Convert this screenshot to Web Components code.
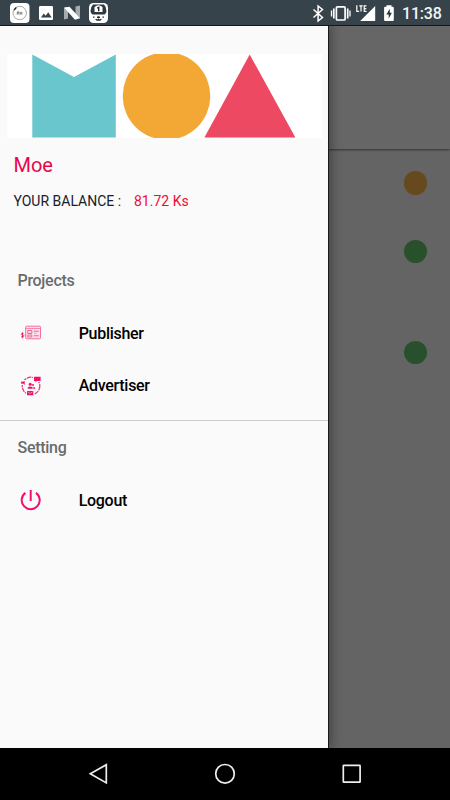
<!DOCTYPE html>
<html lang="en"><head><meta charset="utf-8"><title>MOA</title>
<style>html,body{margin:0;height:100%;overflow:hidden}body{font-family:Roboto,"Liberation Sans",sans-serif}</style></head>
<body><moa-app></moa-app>
<script>
const define=(name,html)=>customElements.define(name,class extends HTMLElement{
  constructor(){super();const t=document.createElement('template');t.innerHTML=html;this.attachShadow({mode:'open'}).append(t.content.cloneNode(true));}
});

define('status-bar',`<style>
:host{display:flex;justify-content:space-between;height:26px;box-sizing:border-box;background:#37434a;border-bottom:1px solid #12171a;color:#fff}
svg{display:block;flex:none}
.right{display:flex}
time{font-size:16px;line-height:28px;width:48px;letter-spacing:-.2px;font-weight:500;color:#f4f5f5;white-space:nowrap}
</style>
<svg width="120" height="25" viewBox="0 0 120 25">
 <rect x="10" y="3" width="19.5" height="20" rx="4" fill="#fff"/>
 <circle cx="19.7" cy="13" r="6.700" fill="none" stroke="#a5a8aa" stroke-width="1"/>
 <path d="M14.2 10.2a6.7 6.7 0 0 1 2.2-2.8" fill="none" stroke="#222" stroke-width="1.3"/>
 <path d="M17.3 14.6v-2.700h1.600v2.700M20.300 14.600v-2.700M21.800 14.600v-2.700" fill="none" stroke="#555" stroke-width=".8"/>
 <rect x="39" y="6" width="14" height="14" rx="1.2" fill="#fff"/>
 <path d="M41 17.500l2.700-4 2 2.300 2.500-3.500 3.500 5.200z" fill="#37434a"/>
 <path d="M64 8l4-.8v11.300l-4 1zM75.500 6.500l4.500-1v13l-4.500-2z" fill="#a5abae"/>
 <path d="M64 7.500l5.500-.7L80 18.300l-5 1.400z" fill="#fff"/>
 <rect x="89" y="3" width="19" height="20" rx="4.500" fill="#fff"/>
 <path d="M93 4.500h11q2.500 2.500 2.500 6.500 0 2.500-2 3.500h-12q-2-1-2-3.500 0-4 2.500-6.500z" fill="#30383d"/>
 <path d="M94.500 7Q98.500 3.500 102.500 7v5h-8z" fill="#fff"/>
 <path d="M97.300 8.200l1.400-.8v3.800" fill="none" stroke="#222" stroke-width="1.400"/>
 <path d="M93 17.200h1.500M102.500 17.200h1.500" stroke="#333" stroke-width="1.200"/>
 <ellipse cx="98.500" cy="17.300" rx="1.600" ry="1" fill="#222"/><path d="M95.800 19q1.200 2 2.700.5 1.500 1.500 2.700-.5" fill="none" stroke="#222" stroke-width="1.300"/>
</svg>
<div class="right">
<svg width="92" height="25" viewBox="310 0 92 25" fill="none" stroke="#fff">
 <path d="M313.500 9.500l9 8-4.400 3.500V6l4.400 3.500-9 8" stroke-width="1.500"/>
 <rect x="336.400" y="6.800" width="8.700" height="13.200" rx="1" stroke-width="1.700"/>
 <path d="M333.800 8.500v10M347.700 8.500v10" stroke-width="1.700"/><path d="M331.500 10.500v6M350 10.500v6" stroke-width="1.300"/>
 <path d="M375.200 6v15h-15z" fill="#fff" stroke="none"/>
 <path d="M356.800 5.200v6.100h2.300M359.300 5.900h3.400M361 5.900v5.500M366.500 5.900h-2.300v5.500h2.300M364.500 8.600h1.800" stroke-width="1.200"/>
 <path d="M386.500 5.200h5v1.600h1.200q1.100 0 1.100 1.100V20q0 1.100-1.100 1.100h-7.500q-1.100 0-1.100-1.100V7.900q0-1.100 1.100-1.100h1.300z" fill="#fff" stroke="none"/>
 <path d="M389.800 8.800l-3.400 5.600h2.300v4.200l3.200-5.800h-2.100z" fill="#28343b" stroke="none"/>
</svg><time>11:38</time></div>`);

define('nav-bar',`<style>:host{display:grid;grid-template-columns:repeat(3,127px);justify-content:center;align-items:center;justify-items:center;height:52px;background:#000}svg{display:block;fill:none;stroke:#eee;stroke-width:1.700}</style>
<svg width="22" height="24"><path d="M19.300 2.700v18.200L3.300 11.800z"/></svg>
<svg width="24" height="24"><circle cx="12" cy="11.800" r="9.300"/></svg>
<svg width="24" height="24"><rect x="3.300" y="3.400" width="16.800" height="16.800" rx=".5"/></svg>`);

define('moa-logo',`<style>:host{display:block;margin:28px 7px 0;width:315px;height:83.500px;background:#fff;overflow:hidden}svg{display:block}</style>
<svg width="315" height="83.500" viewBox="7 54 315 83.500"><path d="M32.300 54.500L74 77l41.800-22.500v83H32.300z" fill="#69c6cd"/><circle cx="166.500" cy="96" r="43.800" fill="#f3a735"/><path d="M249.700 54.500l45.700 83h-91z" fill="#ed4962"/></svg>`);

define('menu-item',`<style>:host{display:flex;align-items:center;height:52.400px;padding-left:20px;font-size:16px;letter-spacing:-.29px;font-weight:500;color:#000}.icon{display:flex;width:58.700px}</style><span class="icon"><slot name="icon"></slot></span><slot></slot>`);
define('menu-heading',`<style>:host{display:block;height:52px;line-height:52px;padding-left:17.500px;font-size:16px;letter-spacing:-.29px;font-weight:500;color:#6b6b6b}</style><slot></slot>`);

define('account-info',`<style>:host{display:flow-root;height:77.500px;padding-left:13.500px}h1{margin:13.500px 0 0;font-size:20px;line-height:28px;font-weight:400;color:#e9064b}p{display:flex;margin:10px 0 0;font-size:14px;line-height:24px;color:#18212a;white-space:pre}.label{width:120.500px}.value{color:#f20a32}</style>
<h1><slot name="name"></slot></h1><p><span class="label">YOUR BALANCE :</span><span class="value"><slot name="balance"></slot></span></p>`);

define('side-drawer',`<style>:host{display:block;box-sizing:border-box;width:328px;height:100%;background:#fafafa;box-shadow:1px 0 0 #191919,2px 0 10px 1px rgba(0,0,0,.35)}
nav{margin-top:40px}hr{border:0;height:1px;background:#cecece;margin:8px 0 1.300px}svg{display:block}</style>
<moa-logo></moa-logo>
<account-info><span slot="name">Moe</span><span slot="balance">81.72 Ks</span></account-info>
<nav><menu-heading>Projects</menu-heading>
<menu-item><svg slot="icon" width="22" height="20" viewBox="20 322.500 22 20" fill="none" stroke="#f2639a">
 <rect x="25.700" y="325.700" width="14.800" height="12.600" rx="1" fill="#fde1ea" stroke-width=".9"/><path d="M26 328h14.500" stroke-width=".7"/>
 <path d="M27.800 330h4v3h-4zM27.800 334.500h4v2h-4z" stroke-width="1"/><path d="M33.800 330.700h5M33.800 335.200h5" stroke-width="1.100"/><path d="M33.800 332.800h3" stroke-width=".5"/>
 <path d="M23.700 333.300c-.4-.8-2.400-.7-2.400.4s2.500.7 2.500 1.900-2.300 1.200-2.700.2M22.500 331.900v5.900" stroke="#ed1760" stroke-width=".9"/><path d="M24.500 334.700h1.500"/>
</svg>Publisher</menu-item>
<menu-item><svg slot="icon" width="22" height="22" viewBox="20 374 22 22" fill="#ee1268">
 <circle cx="31" cy="385" r="8.800" fill="none" stroke="#ee3479" stroke-width="1.300" stroke-dasharray="4.500 .8"/>
 <path d="M33 374h9v7h-9zM26 389h8.300v7H26zM20 379h5v5h-5z" fill="#fafafa"/>
 <path d="M34 375.800h6.600v4.300h-3.800l-1.200 1.300-.1-1.300H34zM27 390h6.300v4.200H27zM21 380.500l1.700.3 2-.8v2.700l.5.800-1.200-.1-.8-1-.8.400-1.400-.3z"/>
 <path d="M27.800 391l2.300 1.500 2.300-1.500" fill="none" stroke="#fff" stroke-width=".5"/>
 <circle cx="30.200" cy="383.200" r="1.500"/><path d="M27.800 387.700v-1.200q2.400-2.200 4.900 0v1.200z"/><circle cx="33" cy="384" r="1"/><path d="M33.500 385.700q1.700 0 1.700 2h-2z"/>
</svg>Advertiser</menu-item><hr>
<menu-heading>Setting</menu-heading>
<menu-item><svg slot="icon" width="22" height="22" fill="none" stroke="#f5106d" stroke-width="2"><path d="M10.700 1v11M5.400 3.900A9 9 0 1 0 16 3.900"/></svg>Logout</menu-item></nav>`);

define('project-status',`<style>:host{display:block;flex:none;width:23.400px;height:23.400px;border-radius:50%;background:var(--tone)}</style>`);

define('dimmed-page',`<style>:host{display:flex;flex-direction:column;background:#646464}
header{height:123px;background:#666;box-shadow:0 1px 2px rgba(0,0,0,.5);flex:none}
section{display:flex;flex-direction:column;align-items:flex-end;padding:22.200px 22.600px}
.a{--tone:#67491f;margin-bottom:45px}.b{--tone:#29502d;margin-bottom:77.800px}.c{--tone:#29502d}</style>
<header></header><section><project-status class="a"></project-status><project-status class="b"></project-status><project-status class="c"></project-status></section>`);

define('moa-app',`<style>:host{display:flex;flex-direction:column;width:450px;height:800px;overflow:hidden}
main{display:grid;grid-template:minmax(0,1fr)/1fr;flex:1;min-height:0;overflow:hidden}
dimmed-page,side-drawer{grid-area:1/1}side-drawer{z-index:1;display:flow-root}</style>
<status-bar></status-bar><main><dimmed-page></dimmed-page><side-drawer></side-drawer></main><nav-bar></nav-bar>`);
</script></body></html>
